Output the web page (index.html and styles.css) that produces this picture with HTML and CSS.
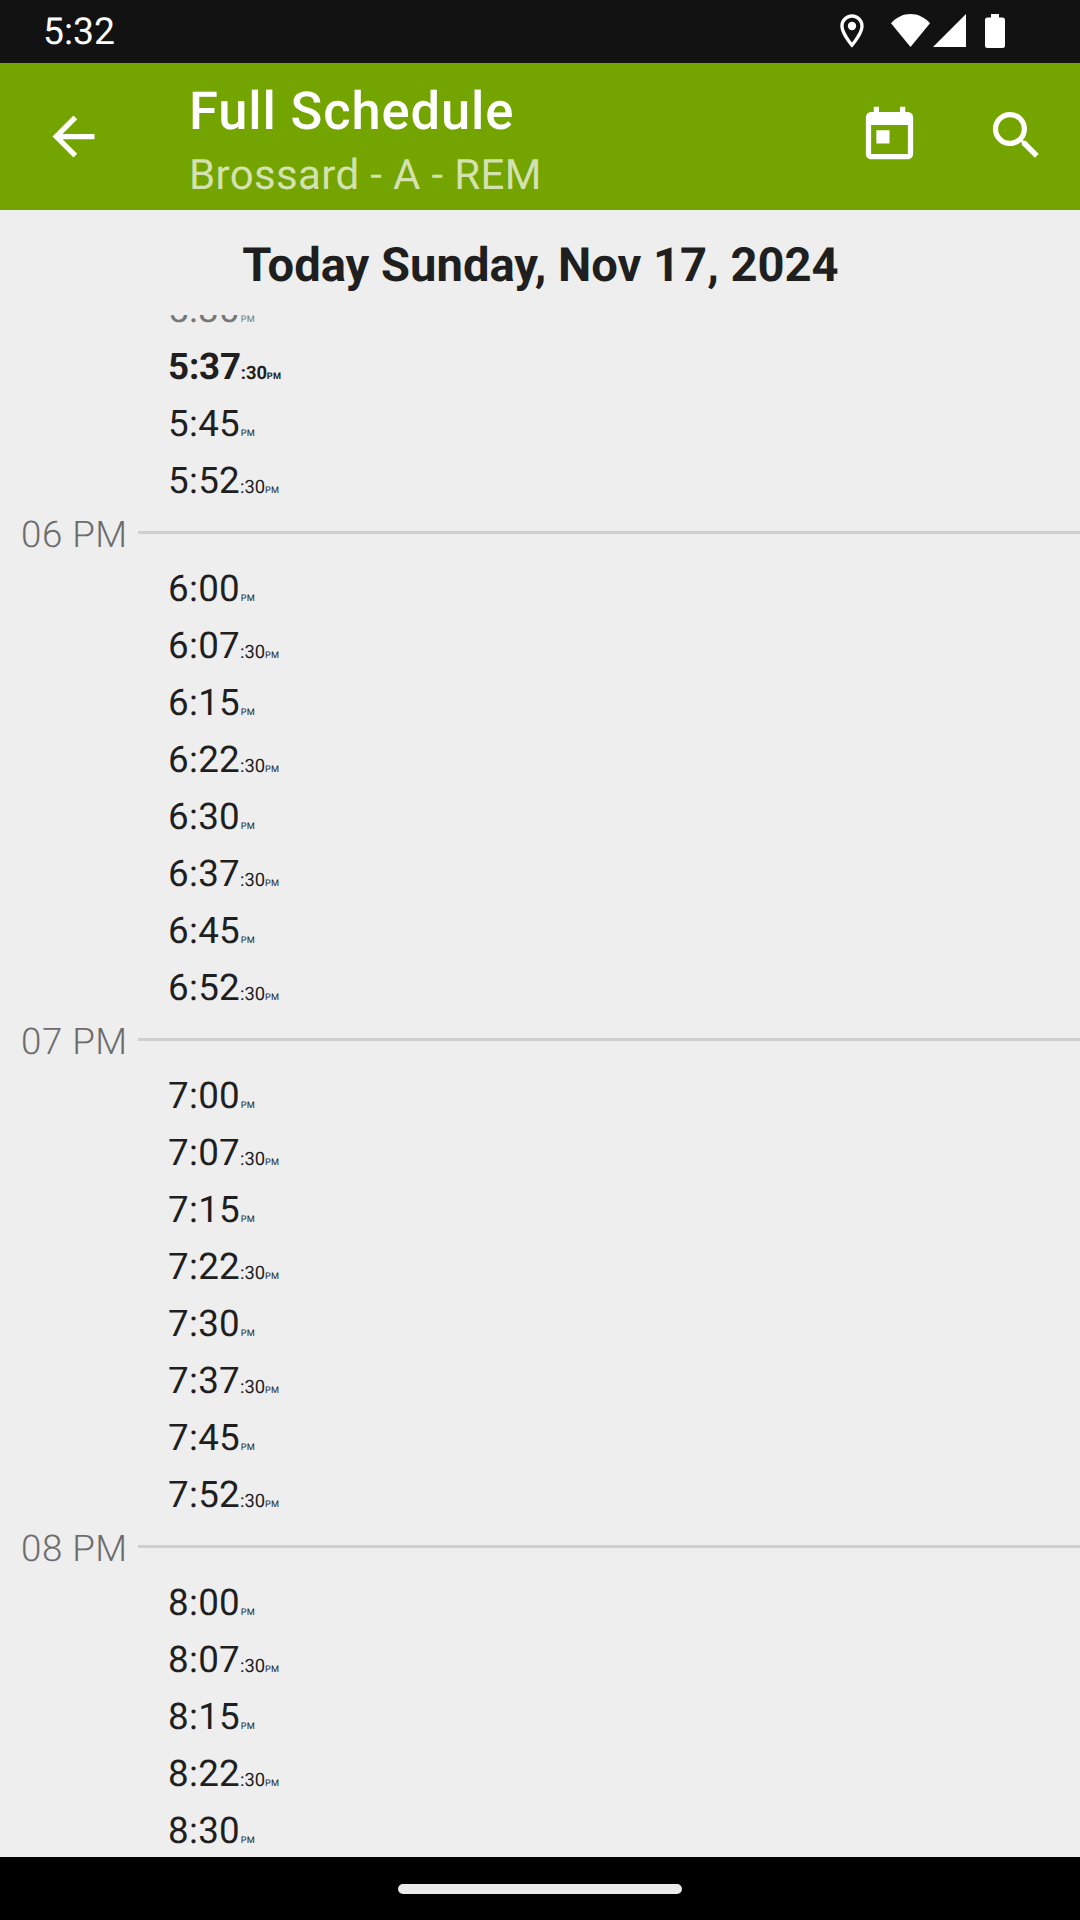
FILE: index.html
```html
<!DOCTYPE html>
<html lang="en">
<head>
<meta charset="utf-8">
<title>Full Schedule</title>
<link rel="stylesheet" href="styles.css">
</head>
<body>
<div class="status-bar">
  <span class="clock">5:32</span>
  <div class="status-icons">
    <svg class="pin" viewBox="0 0 24 24"><path d="M12 2C8.13 2 5 5.13 5 9c0 5.25 7 13 7 13s7-7.75 7-13c0-3.87-3.13-7-7-7zM7 9c0-2.76 2.24-5 5-5s5 2.240 5 5c0 2.880-2.880 7.190-5 9.880C9.920 16.210 7 11.850 7 9z"/><circle cx="12" cy="9" r="2.5"/></svg>
    <svg class="wifi" viewBox="0 0 39 33"><path d="M19.500 33L0 9.200C5.500 3.300 12 0 19.500 0S33.500 3.300 39 9.200z"/></svg>
    <svg class="signal" viewBox="0 0 33 33"><path d="M33 0v33H0z"/></svg>
    <svg class="battery" viewBox="0 0 20 34"><path d="M6 0h8v3.500h3.500a2.500 2.500 0 0 1 2.500 2.500v25.500a2.500 2.500 0 0 1-2.500 2.500h-15a2.500 2.500 0 0 1-2.500-2.500v-25.500a2.500 2.500 0 0 1 2.500-2.500h3.500z"/></svg>
  </div>
</div>
<header class="app-bar">
  <svg class="icon back" viewBox="0 0 24 24"><path d="M20 11H7.830l5.590-5.590L12 4l-8 8 8 8 1.410-1.410L7.830 13H20v-2z"/></svg>
  <div class="titles">
    <h1 class="title">Full Schedule</h1>
    <p class="subtitle">Brossard - A - REM</p>
  </div>
  <div class="actions">
    <svg class="icon" viewBox="0 0 24 24"><path d="M19 3h-1V1h-2v2H8V1H6v2H5c-1.110 0-1.990.9-1.990 2L3 19c0 1.100.89 2 2 2h14c1.100 0 2-.9 2-2V5c0-1.100-.9-2-2-2zm0 16H5V8h14v11zM7 10h5v5H7z"/></svg>
    <svg class="icon" viewBox="0 0 24 24"><path d="M15.500 14h-.79l-.28-.27C15.410 12.590 16 11.110 16 9.500 16 5.910 13.090 3 9.500 3S3 5.910 3 9.500 5.910 16 9.500 16c1.610 0 3.090-.59 4.230-1.570l.27.28v.79l5 4.990L20.490 19l-4.990-5zm-6 0C7.010 14 5 11.990 5 9.500S7.010 5 9.500 5 14 7.010 14 9.500 11.990 14 9.500 14z"/></svg>
  </div>
</header>
<h2 class="day">Today Sunday, Nov 17, 2024</h2>
<main class="schedule">
  <div class="times">
    <div class="time past">5:30<small class="pm">PM</small></div>
    <div class="time next">5:37<small class="sec">:30</small><small class="pm">PM</small></div>
    <div class="time">5:45<small class="pm">PM</small></div>
    <div class="time">5:52<small class="sec">:30</small><small class="pm">PM</small></div>
    <div class="hour">06 PM</div>
    <div class="time">6:00<small class="pm">PM</small></div>
    <div class="time">6:07<small class="sec">:30</small><small class="pm">PM</small></div>
    <div class="time">6:15<small class="pm">PM</small></div>
    <div class="time">6:22<small class="sec">:30</small><small class="pm">PM</small></div>
    <div class="time">6:30<small class="pm">PM</small></div>
    <div class="time">6:37<small class="sec">:30</small><small class="pm">PM</small></div>
    <div class="time">6:45<small class="pm">PM</small></div>
    <div class="time">6:52<small class="sec">:30</small><small class="pm">PM</small></div>
    <div class="hour">07 PM</div>
    <div class="time">7:00<small class="pm">PM</small></div>
    <div class="time">7:07<small class="sec">:30</small><small class="pm">PM</small></div>
    <div class="time">7:15<small class="pm">PM</small></div>
    <div class="time">7:22<small class="sec">:30</small><small class="pm">PM</small></div>
    <div class="time">7:30<small class="pm">PM</small></div>
    <div class="time">7:37<small class="sec">:30</small><small class="pm">PM</small></div>
    <div class="time">7:45<small class="pm">PM</small></div>
    <div class="time">7:52<small class="sec">:30</small><small class="pm">PM</small></div>
    <div class="hour">08 PM</div>
    <div class="time">8:00<small class="pm">PM</small></div>
    <div class="time">8:07<small class="sec">:30</small><small class="pm">PM</small></div>
    <div class="time">8:15<small class="pm">PM</small></div>
    <div class="time">8:22<small class="sec">:30</small><small class="pm">PM</small></div>
    <div class="time">8:30<small class="pm">PM</small></div>
  </div>
</main>
<nav class="nav-bar"><div class="handle"></div></nav>
</body>
</html>
```
FILE: styles.css
```css
* { box-sizing: border-box; margin: 0; padding: 0; }

body {
  display: flex;
  flex-direction: column;
  width: 1080px;
  height: 1920px;
  overflow: hidden;
  background: #eee;
  color: #1f1f1f;
  font-family: Roboto, sans-serif;
  text-rendering: geometricPrecision;
}

svg { display: block; fill: #fff; flex: none; }

.status-bar {
  display: flex;
  justify-content: space-between;
  flex: none;
  height: 63px;
  padding: 0 75px 0 43px;
  background: #121212;
  color: #fff;
}

.clock {
  font-size: 37.3px;
  line-height: 65px;
}

.status-icons { display: flex; align-items: flex-start; padding-top: 14px; }
.pin { width: 40px; height: 40px; margin: -3px 19px 0 0; }
.wifi { width: 39px; height: 33px; margin-right: 3px; }
.signal { width: 33px; height: 33px; margin-right: 19px; }
.battery { width: 20px; height: 34px; }

.app-bar {
  display: flex;
  flex: none;
  height: 147px;
  padding: 0 32px 0 42px;
  background: #73a400;
  color: #fff;
}

.icon { width: 63px; height: 63px; }
.back { margin-top: 42px; }
.titles { flex: 1; margin-left: 84px; padding-top: 17px; }

.title {
  font-size: 52.5px;
  font-weight: 500;
  line-height: 62px;
  letter-spacing: 0.85px;
}

.subtitle {
  margin-top: 9px;
  font-size: 42px;
  line-height: 50px;
  letter-spacing: 0.36px;
  color: rgba(255, 255, 255, 0.7);
}

.actions { display: flex; gap: 64px; padding-top: 41px; }

.day {
  flex: none;
  height: 105px;
  padding-left: 1px;
  font-size: 47.15px;
  font-weight: 700;
  line-height: 110px;
  text-align: center;
}

.schedule { flex: 1; min-height: 0; overflow: hidden; }
.times { margin-top: -34px; }

.time, .hour {
  font-size: 36.75px;
  white-space: nowrap;
}

.time {
  height: 57px;
  padding-left: 168px;
  line-height: 57px;
  letter-spacing: 0.3px;
}

.time small { line-height: 1; }
.sec { font-size: 18.4px; letter-spacing: 0; }
.pm { margin-left: 0.7px; font-size: 9.2px; }
.sec + .pm { margin-left: -0.3px; }
.past { color: #777; }
.next { font-weight: 700; letter-spacing: -0.2px; }
.next .pm { letter-spacing: 0.3px; }

.hour {
  display: flex;
  height: 51px;
  padding-left: 21px;
  line-height: 51px;
  letter-spacing: 0.5px;
  font-weight: 300;
  color: #6c6c6c;
}

.hour::after {
  content: "";
  height: 3px;
  margin: 22px 0 0 auto;
  width: 942px;
  background: #cfcfcf;
}

.nav-bar {
  display: flex;
  justify-content: center;
  flex: none;
  height: 63px;
  padding-top: 27px;
  background: #000;
}

.handle { width: 284px; height: 10px; border-radius: 5px; background: #ebebeb; }
```
